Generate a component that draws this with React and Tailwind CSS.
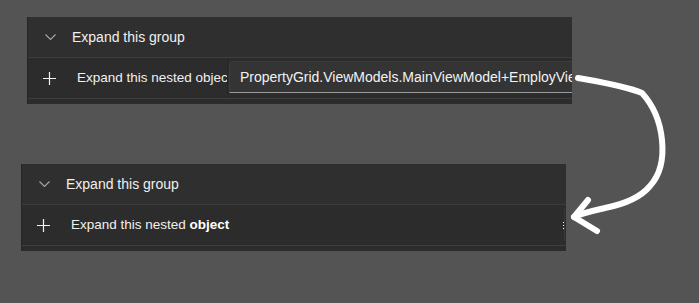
import React from 'react';

// ── Icons ─────────────────────────────────────────────────────────────────────

function Chevron() {
    return (
        <svg width="11" height="6" viewBox="0 0 11 6" className="shrink-0">
            <path d="M0.5 0.5 L5.5 5.5 L10.5 0.5" fill="none" stroke="#a8a8a8" strokeWidth="1.1" />
        </svg>
    );
}

function Plus() {
    return (
        <svg width="13" height="13" viewBox="0 0 13 13" className="shrink-0">
            <path d="M6.5 0 V13 M0 6.5 H13" fill="none" stroke="#f2f2f2" strokeWidth="1.2" />
        </svg>
    );
}

// ── Property grid panel ───────────────────────────────────────────────────────

function GroupPanel({ className, editing }) {
    return (
        <div className={`relative w-[545px] h-[87px] bg-[#2c2c2c] border-l border-[#262626] overflow-hidden ${className}`}>
            {/* Group header */}
            <div className="flex items-center h-[41px] bg-[#2f2f2f] border-b border-[#3d3d3d] pl-[17px]">
                <Chevron />
                <span className="ml-[16px] text-[14px] text-[#f0f0f0]">Expand this group</span>
            </div>

            {/* Nested object row */}
            {editing ? (
                <div className="flex h-[41px] border-b border-[#3e3e3e]">
                    <div className="flex items-center w-[199px] shrink-0 pl-[15px] overflow-hidden whitespace-nowrap">
                        <Plus />
                        <span className="ml-[21px] text-[13.5px] text-[#f0f0f0]">Expand this nested object</span>
                    </div>
                    <div className="flex-1 border-l border-[#262626] pl-[1px] pt-[3px] min-w-0">
                        <div className="w-[400px] h-[32px] flex items-center pl-[10px] bg-[#343434] border border-[#3c3c3c] border-b-[#9c9c9c] rounded-tl-[4px] whitespace-nowrap text-[14px] text-[#f2f2f2]">
                            PropertyGrid.ViewModels.MainViewModel+EmployViewModel
                        </div>
                    </div>
                </div>
            ) : (
                <div className="flex items-center h-[41px] border-b border-[#3e3e3e] pl-[15px] pr-[1px]">
                    <Plus />
                    <span className="ml-[21px] text-[13.5px] text-[#f0f0f0] whitespace-nowrap">
                        Expand this nested <b className="font-bold text-white">object</b>
                    </span>
                    <div className="ml-auto flex flex-col gap-[2px] border-r border-[#3a3a3a] h-[32px] justify-center">
                        <span className="w-[1px] h-[1px] bg-white" />
                        <span className="w-[1px] h-[1px] bg-white" />
                        <span className="w-[1px] h-[1px] bg-white" />
                    </div>
                </div>
            )}
        </div>
    );
}

// ── Root ──────────────────────────────────────────────────────────────────────

export default function App() {
    return (
        <div
            className="relative w-[699px] h-[303px] bg-[#545454] overflow-hidden pt-[17px]"
            style={{ fontFamily: '"Liberation Sans", Arial, sans-serif' }}
        >
            <GroupPanel className="ml-[27px]" editing />
            <GroupPanel className="ml-[21px] mt-[60px]" />

            {/* Hand-drawn arrow */}
            <svg className="absolute left-0 top-0 pointer-events-none" width="699" height="303">
                <path
                    d="M578 78 C600 82 625 86 642 93 C652 104 660 120 662 140 C664 160 660 175 650 186 C640 198 625 204 605 208 C592 211 582 213 574 217"
                    fill="none" stroke="#ffffff" strokeWidth="6" strokeLinecap="round" strokeLinejoin="round"
                />
                <path d="M588 200 L574 217 L597 231" fill="none" stroke="#ffffff" strokeWidth="6" strokeLinecap="round" strokeLinejoin="round" />
            </svg>
        </div>
    );
}
